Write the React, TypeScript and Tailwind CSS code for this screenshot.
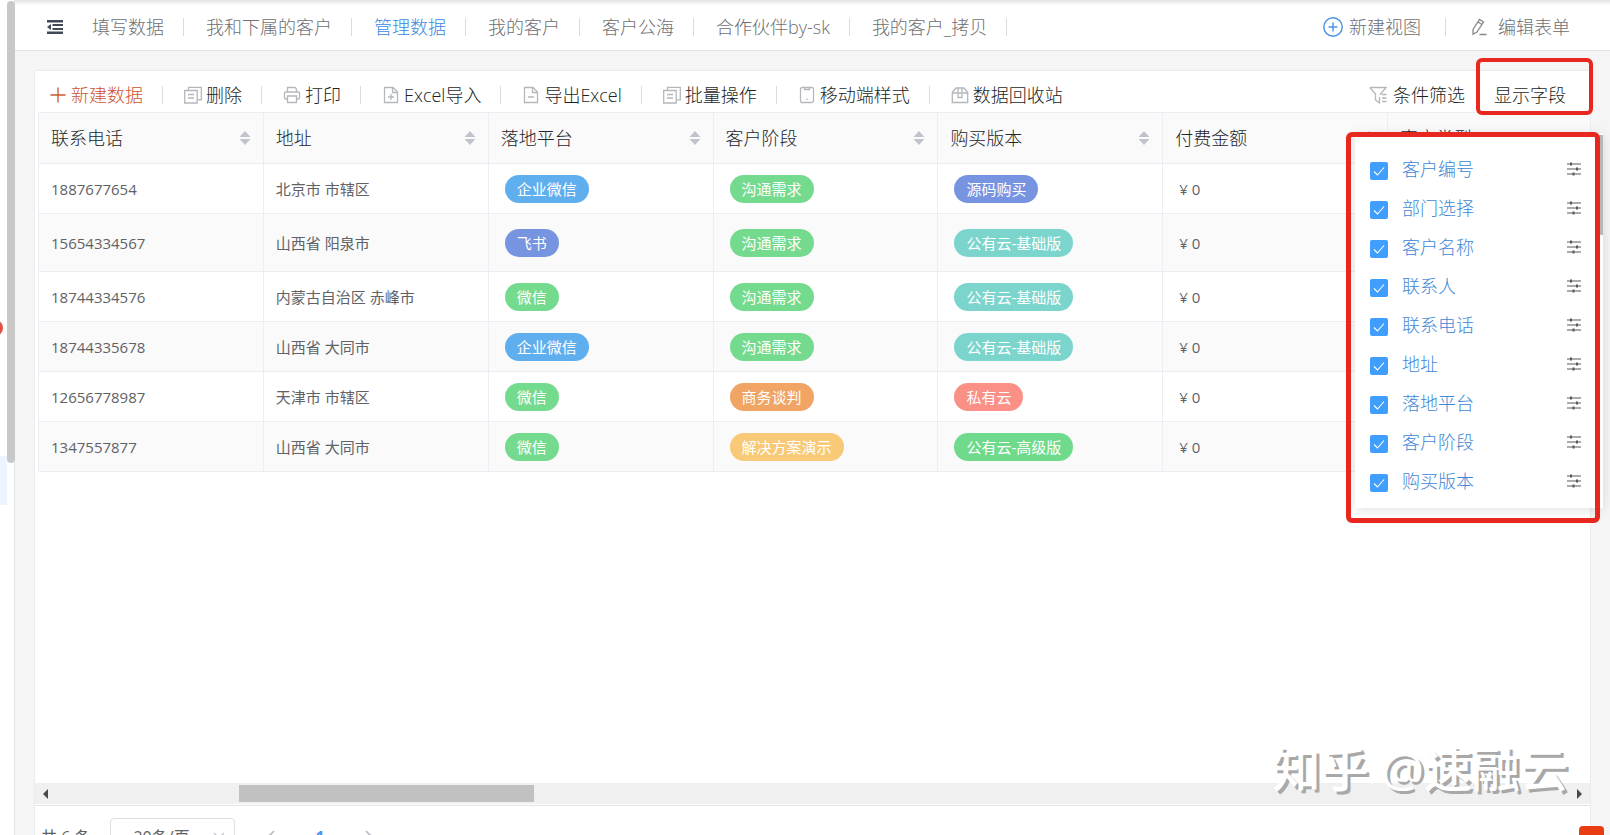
import type { ReactNode } from 'react'

const tabs = ['填写数据', '我和下属的客户', '管理数据', '我的客户', '客户公海', '合作伙伴by-sk', '我的客户_拷贝']
const activeTab = '管理数据'

const columns = ['联系电话', '地址', '落地平台', '客户阶段', '购买版本', '付费金额', '客户类型']

const fields = ['客户编号', '部门选择', '客户名称', '联系人', '联系电话', '地址', '落地平台', '客户阶段', '购买版本']

const tagColors: Record<string, string> = {
  企业微信: 'bg-[#5faeee]',
  飞书: 'bg-[#7694e0]',
  微信: 'bg-[#74da8e]',
  沟通需求: 'bg-[#74da8e]',
  商务谈判: 'bg-[#f0a564]',
  解决方案演示: 'bg-[#f8ca78]',
  源码购买: 'bg-[#7694e0]',
  '公有云-基础版': 'bg-[#7bd5cd]',
  私有云: 'bg-[#fa9086]',
  '公有云-高级版': 'bg-[#6fda8b]',
}

interface Row {
  phone: string
  address: string
  platform: string
  stage: string
  version: string
  tall?: boolean
}

const rows: Row[] = [
  { phone: '1887677654', address: '北京市 市辖区', platform: '企业微信', stage: '沟通需求', version: '源码购买' },
  { phone: '15654334567', address: '山西省 阳泉市', platform: '飞书', stage: '沟通需求', version: '公有云-基础版', tall: true },
  { phone: '18744334576', address: '内蒙古自治区 赤峰市', platform: '微信', stage: '沟通需求', version: '公有云-基础版' },
  { phone: '18744335678', address: '山西省 大同市', platform: '企业微信', stage: '沟通需求', version: '公有云-基础版' },
  { phone: '12656778987', address: '天津市 市辖区', platform: '微信', stage: '商务谈判', version: '私有云' },
  { phone: '1347557877', address: '山西省 大同市', platform: '微信', stage: '解决方案演示', version: '公有云-高级版' },
]

function Icon({ children, className = 'size-[18px] text-[#b4b7bc]' }: { children: ReactNode; className?: string }) {
  return (
    <svg viewBox="0 0 18 18" fill="none" stroke="currentColor" strokeWidth="1.3" className={`shrink-0 ${className}`} aria-hidden="true">
      {children}
    </svg>
  )
}

const copyIcon = (
  <Icon>
    <path d="M.7 4.500h12.500v12.500H.7zM4.500 4.500V1.300h12.800v12.500h-4M4 8.500h6M4 12h6" />
  </Icon>
)

const printIcon = (
  <Icon>
    <path d="M4.500 6V1.500h7.500L13.500 3v3M4.500 13H2.500a1 1 0 0 1-1-1V7a1 1 0 0 1 1-1h13a1 1 0 0 1 1 1v5a1 1 0 0 1-1 1h-2M4.500 10h9v6.500h-9z" />
  </Icon>
)

const importIcon = (
  <Icon>
    <path d="M2.500 1.500h8.500l4.500 4.500v10.500h-13zM10.500 1.500v5h5M6 11h6M9 8v6" />
  </Icon>
)

const exportIcon = (
  <Icon>
    <path d="M2.500 1.500h8.500l4.500 4.500v10.500h-13zM10.500 1.500v5h5M6 11h6" />
  </Icon>
)

const mobileIcon = (
  <Icon>
    <rect x="2.5" y="1.500" width="13" height="15" rx="1.500" />
    <path d="M6.500 2v1.500h5V2M9 12.500v1.500" />
  </Icon>
)

const recycleIcon = (
  <Icon>
    <path d="M1.300 16.500V6.500L5 2h8l3.700 4.500v10zM1.500 7h15M7 2v9.500h4V2" />
  </Icon>
)

const tools = [
  { label: '删除', icon: copyIcon },
  { label: '打印', icon: printIcon },
  { label: 'Excel导入', icon: importIcon },
  { label: '导出Excel', icon: exportIcon },
  { label: '批量操作', icon: copyIcon },
  { label: '移动端样式', icon: mobileIcon },
  { label: '数据回收站', icon: recycleIcon },
]

function Divider() {
  return <span className="h-[18px] w-px shrink-0 bg-[#d9dbdf]" />
}

function Tag({ text }: { text: string }) {
  return <span className={`ml-1 inline-block rounded-full px-3 align-middle leading-7 text-white ${tagColors[text]}`}>{text}</span>
}

function SortIcon() {
  return (
    <svg viewBox="0 0 12 14" fill="#c0c4cc" className="h-3.5 w-3" aria-hidden="true">
      <path d="M6 0l5.500 6H.5zM6 14l5.500-6H.5z" />
    </svg>
  )
}

function TopNav() {
  return (
    <nav className="flex h-[51px] shrink-0 items-center border-b border-[#e3e4e6] bg-linear-to-b from-[#e2e2e2] to-white to-[5px] pt-[3px] pr-10 pl-8 text-[#6e7074]">
      <button type="button" aria-label="收起菜单" className="mr-[29px] text-[#414a54]">
        <svg viewBox="0 0 16 14" fill="currentColor" className="h-3.5 w-4">
          <path d="M0 0h16v2.600H0zM5.500 4h10.500v2H5.500zM5.500 8h10.500v2H5.500zM0 11.400h16V14H0zM0 7l4-3v6z" />
        </svg>
      </button>
      {tabs.map((tab) => (
        <div key={tab} className="flex items-center">
          <a href="#" className={tab === activeTab ? 'text-[#3a88e0]' : ''}>{tab}</a>
          <span className="ml-[19px] mr-[22px] h-[18px] w-px bg-[#d9dbdf]" />
        </div>
      ))}
      <button type="button" className="ml-auto flex items-center gap-1.5">
        <Icon className="size-5 text-[#4a94e6]">
          <circle cx="9" cy="9" r="8.300" />
          <path d="M9 5v8M5 9h8" />
        </Icon>
        新建视图
      </button>
      <span className="mx-6 h-[18px] w-px bg-[#d9dbdf]" />
      <button type="button" className="flex items-center gap-2.5">
        <Icon className="size-[18px] text-[#85878b]">
          <path d="M3 11.500L9.500 1.500l4 2.500L7 14l-4 2.200zM8 4l4 2.500M9.500 16.500h7" />
        </Icon>
        编辑表单
      </button>
    </nav>
  )
}

function Toolbar() {
  return (
    <div className="flex h-[41px] shrink-0 items-center pt-1.5 pl-3.5 text-[#1c1f23]">
      <button type="button" className="mr-[19px] flex items-center gap-1 text-[#cc5430]">
        <Icon className="size-[18px]">
          <path d="M9 1.500v15M1.500 9h15" />
        </Icon>
        新建数据
      </button>
      {tools.map((tool) => (
        <div key={tool.label} className="flex items-center">
          <Divider />
          <button type="button" className="ml-[21px] mr-[19px] flex items-center gap-1 whitespace-nowrap">
            {tool.icon}
            {tool.label}
          </button>
        </div>
      ))}
      <button type="button" className="ml-auto flex items-center gap-1.5">
        <Icon>
          <path d="M.8 1.500h16.400L11.500 8v1M.8 1.500L6.500 8v6l4 3v-6M13 8.500h4.500M13 12h4.500M13 15.500h4.500" />
        </Icon>
        条件筛选
      </button>
      <div className="relative mr-6 ml-[29px]">
        <button type="button">显示字段</button>
        <span className="pointer-events-none absolute -top-[25px] -left-[18px] h-[57px] w-[117px] rounded-md border-4 border-[#e8281f]" />
      </div>
    </div>
  )
}

function DataTable() {
  return (
    <div className="overflow-hidden pl-[3px]">
      <table className="w-[1575px] table-fixed border-collapse text-left text-[15px] font-normal text-[#606266]">
        <thead>
          <tr className="h-[51px] bg-[#fafafa] text-lg text-[#23262b]">
            {columns.map((col) => (
              <th key={col} className="border border-[#ebeef2] px-3 font-light">
                <div className="flex items-center justify-between">
                  {col}
                  <SortIcon />
                </div>
              </th>
            ))}
          </tr>
        </thead>
        <tbody>
          {rows.map((row) => (
            <tr key={row.phone} className={`even:bg-[#fafafa] *:border *:border-[#ebeef2] *:px-3 ${row.tall ? 'h-[58px]' : 'h-[50px]'}`}>
              <td>{row.phone}</td>
              <td>{row.address}</td>
              <td><Tag text={row.platform} /></td>
              <td><Tag text={row.stage} /></td>
              <td><Tag text={row.version} /></td>
              <td><span className="ml-1">¥ 0</span></td>
              <td />
            </tr>
          ))}
        </tbody>
      </table>
    </div>
  )
}

function HorizontalScrollbar() {
  return (
    <div className="mt-auto flex h-[21px] shrink-0 items-center justify-between bg-[#f0f0f0] px-2">
      <svg viewBox="0 0 5 10" fill="#4a4a4a" className="h-2.5 w-[5px]" aria-hidden="true">
        <path d="M5 0v10L0 5z" />
      </svg>
      <div className="mr-auto ml-[191px] h-[17px] w-[19.2%] bg-[#c1c1c1]" />
      <svg viewBox="0 0 5 10" fill="#4a4a4a" className="h-2.5 w-[5px]" aria-hidden="true">
        <path d="M0 0v10l5-5z" />
      </svg>
    </div>
  )
}

function Pagination() {
  return (
    <footer className="mt-px flex h-[30px] shrink-0 items-start overflow-hidden border-t border-[#e3e4e6] pt-3 pl-1.5 text-base font-normal text-[#606266]">
      <span className="leading-[38px]">共 6 条</span>
      <div className="relative ml-5">
        <select aria-label="每页条数" className="h-[38px] w-[125px] appearance-none rounded border border-[#dcdfe6] bg-white pl-[22px]">
          <option>20条/页</option>
        </select>
        <svg viewBox="0 0 12 8" fill="none" stroke="#c0c4cc" strokeWidth="1.3" className="absolute top-3.5 right-2.5 h-2 w-3" aria-hidden="true">
          <path d="M1 1l5 5 5-5" />
        </svg>
      </div>
      <button type="button" aria-label="上一页" className="ml-8 pt-3">
        <svg viewBox="0 0 8 14" fill="none" stroke="#b4b8bf" strokeWidth="1.6" className="h-3.5 w-2">
          <path d="M7 1L1 7l6 6" />
        </svg>
      </button>
      <button type="button" className="ml-10 font-bold leading-[38px] text-[#4a94e6]">1</button>
      <button type="button" aria-label="下一页" className="ml-10 pt-3">
        <svg viewBox="0 0 8 14" fill="none" stroke="#b4b8bf" strokeWidth="1.6" className="h-3.5 w-2">
          <path d="M1 1l6 6-6 6" />
        </svg>
      </button>
    </footer>
  )
}

function FieldPanel() {
  return (
    <div className="absolute top-[133px] right-[7px] w-[248px] bg-white pt-4 pr-[22px] pb-2 pl-[15px] shadow-[0_2px_12px_rgba(0,0,0,0.12)]">
      {fields.map((field) => (
        <div key={field} className="flex h-[39px] items-center justify-between">
          <label className="flex items-center gap-3.5 text-[#3f87d6]">
            <span className="relative mt-1 size-[18px]">
              <input type="checkbox" defaultChecked className="block size-[18px] appearance-none rounded-xs bg-[#409eff]" />
              <svg viewBox="0 0 18 18" fill="none" stroke="#fff" strokeWidth="1.100" className="pointer-events-none absolute inset-0" aria-hidden="true">
                <path d="M4 9.500l3.500 3.500 6.500-7.500" />
              </svg>
            </span>
            {field}
          </label>
          <svg viewBox="0 0 14 14" stroke="#55585c" fill="#55585c" className="size-3.5" aria-hidden="true">
            <path d="M0 2h14M0 7h14M0 12h14" strokeWidth="1.1" />
            <path d="M4 .5v3M10 5.500v3M6.500 10.500v3" strokeWidth="2" />
          </svg>
        </div>
      ))}
      <span className="absolute top-0.5 right-0 h-[100px] w-1.5 bg-[#b9b6b7]" />
      <span className="pointer-events-none absolute -top-px -bottom-[15px] -left-[9px] w-[254px] rounded-md border-[5px] border-[#e8281f]" />
    </div>
  )
}

export default function App() {
  return (
    <div className="relative flex h-screen overflow-hidden bg-[#f5f5f6] font-['Open_Sans','Noto_Sans_CJK_SC',sans-serif] text-lg leading-6 font-light">
      <aside className="relative w-[15px] shrink-0 border-r border-[#e3e4e6] bg-white">
        <span className="absolute top-[456px] left-0 h-[49px] w-[7px] bg-[#ecf5ff]" />
        <span className="absolute top-[320px] -left-[13px] size-4 rounded-full bg-[#dd5147]" />
        <span className="absolute top-px left-[7px] h-[462px] w-2 rounded-full bg-[#c8c8c8]" />
      </aside>
      <div className="flex min-w-0 flex-1 flex-col">
        <TopNav />
        <main className="mt-[19px] mr-[19px] ml-[19px] flex min-h-0 flex-1 flex-col border-x border-t border-[#ebecee] bg-white">
          <Toolbar />
          <DataTable />
          <HorizontalScrollbar />
          <Pagination />
        </main>
      </div>
      <FieldPanel />
      <p className="pointer-events-none absolute right-[42px] bottom-[42px] text-5xl font-medium text-white [text-shadow:3px_3px_0_#a8a8a8]">知乎 @速融云</p>
      <button type="button" aria-label="帮助" className="absolute right-1.5 bottom-0 h-[9px] w-[25px] rounded-t bg-[#e93c12]" />
    </div>
  )
}
